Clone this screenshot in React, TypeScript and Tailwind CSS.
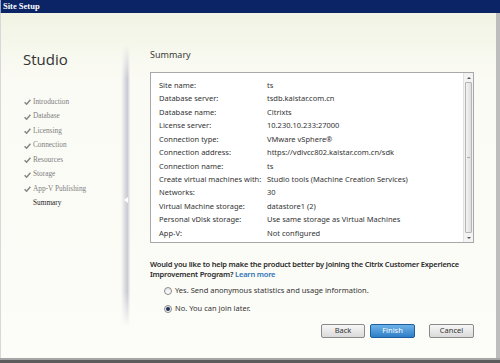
import React from "react";

const rows: [string, string][] = [
  ["Site name:", "ts"],
  ["Database server:", "tsdb.kaistar.com.cn"],
  ["Database name:", "Citrixts"],
  ["License server:", "10.230.10.233:27000"],
  ["Connection type:", "VMware vSphere®"],
  ["Connection address:", "https://vdivcc802.kaistar.com.cn/sdk"],
  ["Connection name:", "ts"],
  ["Create virtual machines with:", "Studio tools (Machine Creation Services)"],
  ["Networks:", "30"],
  ["Virtual Machine storage:", "datastore1 (2)"],
  ["Personal vDisk storage:", "Use same storage as Virtual Machines"],
  ["App-V:", "Not configured"],
];

const steps = [
  "Introduction",
  "Database",
  "Licensing",
  "Connection",
  "Resources",
  "Storage",
  "App-V Publishing",
];

function Check() {
  return (
    <svg width="7" height="6" viewBox="0 0 7 6" className="shrink-0">
      <path d="M0.6 3.2 L2.6 5.2 L6.4 0.8" fill="none" stroke="#868686" strokeWidth="1.5" />
    </svg>
  );
}

function Radio({ on }: { on?: boolean }) {
  return (
    <div className="w-[8px] h-[8px] rounded-full border border-[#8a8a8a] bg-gradient-to-b from-[#e6e6e6] to-[#ffffff] flex items-center justify-center shrink-0">
      {on ? <div className="w-[4px] h-[4px] rounded-full bg-[#1d2f55]" /> : null}
    </div>
  );
}

export default function App() {
  return (
    <div className="w-[500px] h-[363px] flex flex-col overflow-hidden bg-[#5c5c5c] font-['Noto_Sans',sans-serif]">
      <div className="h-[13px] shrink-0 bg-[#0b2466] border-l border-[#9aa4c4] flex items-center pl-[2px] text-white font-['Liberation_Serif',serif] font-bold text-[8.5px] leading-none">
        Site Setup
      </div>
      <div className="h-[345px] shrink-0 flex border-l border-[#d8d8d8] border-r-[4px] border-r-[#bdbdbd] bg-gradient-to-b from-[#f1f4e4] via-[#fbfbf5] via-[20%] to-[#fcfcf8]">
        {/* left nav */}
        <div className="w-[120px] shrink-0 flex flex-col">
          <div className="pl-[22px] pt-[37px] text-[15px] leading-[18px] text-[#333] font-['Open_Sans',sans-serif]">
            Studio
          </div>
          <div className="flex flex-col pt-[27px] pl-[23px]">
            {steps.map((s) => (
              <div key={s} className="h-[14.5px] flex items-center gap-[2px] font-['Liberation_Serif',serif] text-[7.3px] text-[#7e7e7e]">
                <Check />
                <span>{s}</span>
              </div>
            ))}
            <div className="h-[14.5px] flex items-center pl-[9px] font-['Liberation_Serif',serif] text-[7.3px] text-[#1e1e1e]">
              Summary
            </div>
          </div>
        </div>
        {/* divider */}
        <div className="w-[9px] shrink-0 flex flex-col py-[32px]">
          <div className="relative flex-1 bg-gradient-to-r from-[#fbfbf5] via-[#c9cad3] via-[70%] to-[#f4f4f4] [mask-image:linear-gradient(to_bottom,transparent,black_12%,black_88%,transparent)]">
            <div className="absolute left-[3px] top-[152px] w-0 h-0 border-y-[3px] border-y-transparent border-r-[4px] border-r-white" />
          </div>
        </div>
        {/* right content */}
        <div className="flex-1 flex flex-col pl-[20px] pr-[22px] text-[7.5px] text-[#333]">
          <div className="pt-[36px] text-[9px] leading-[11px] text-[#3a3a3a]">Summary</div>
          <div className="mt-[12px] h-[171px] flex border border-[#a8a8a8] bg-white">
            <div className="flex-1 flex flex-col pt-[6px] pl-[8px]">
              {rows.map(([k, v]) => (
                <div key={k} className="h-[13.45px] flex items-center leading-none">
                  <span className="w-[108px] shrink-0">{k}</span>
                  <span>{v}</span>
                </div>
              ))}
            </div>
            {/* scrollbar */}
            <div className="w-[10px] shrink-0 flex flex-col bg-[#f3f3f3] border-l border-[#e2e2e2]">
              <div className="h-[9px] flex items-center justify-center">
                <div className="w-0 h-0 border-x-[2px] border-x-transparent border-b-[2px] border-b-[#555]" />
              </div>
              <div className="flex-1 mx-[1px] rounded-[1px] border border-[#b4b4b4] bg-gradient-to-r from-[#f4f4f4] to-[#dedede] flex items-center justify-center">
                <div className="w-[3px] h-[1px] bg-[#aaa]" />
              </div>
              <div className="h-[9px] flex items-center justify-center">
                <div className="w-0 h-0 border-x-[2px] border-x-transparent border-t-[2px] border-t-[#555]" />
              </div>
            </div>
          </div>
          <div className="mt-[16px] font-semibold leading-[10px] text-[#2a2a2a] whitespace-nowrap tracking-[-0.2px]">
            Would you like to help make the product better by joining the Citrix Customer Experience
            <br />
            Improvement Program? <span className="text-[#2f73b8]">Learn more</span>
          </div>
          <div className="mt-[3px] pl-[14px] flex flex-col">
            <div className="h-[18px] flex items-center gap-[3px]">
              <Radio />
              <span>Yes. Send anonymous statistics and usage information.</span>
            </div>
            <div className="h-[18px] flex items-center gap-[3px]">
              <Radio on />
              <span>No. You can join later.</span>
            </div>
          </div>
          <div className="mt-[6px] flex justify-end items-center">
            <div className="w-[44px] h-[14px] rounded-[2px] border border-[#8a8a8a] bg-gradient-to-b from-[#f7f7f7] to-[#dadada] flex items-center justify-center">
              Back
            </div>
            <div className="ml-[5px] w-[45px] h-[14px] rounded-[2px] border border-[#1f5e9e] bg-gradient-to-b from-[#6db3e8] to-[#2d7ec8] text-white flex items-center justify-center">
              Finish
            </div>
            <div className="ml-[14px] w-[45px] h-[14px] rounded-[2px] border border-[#8a8a8a] bg-gradient-to-b from-[#f7f7f7] to-[#dadada] flex items-center justify-center">
              Cancel
            </div>
          </div>
        </div>
      </div>
      <div className="h-[2px] shrink-0 bg-[#a5a5a5]" />
    </div>
  );
}
